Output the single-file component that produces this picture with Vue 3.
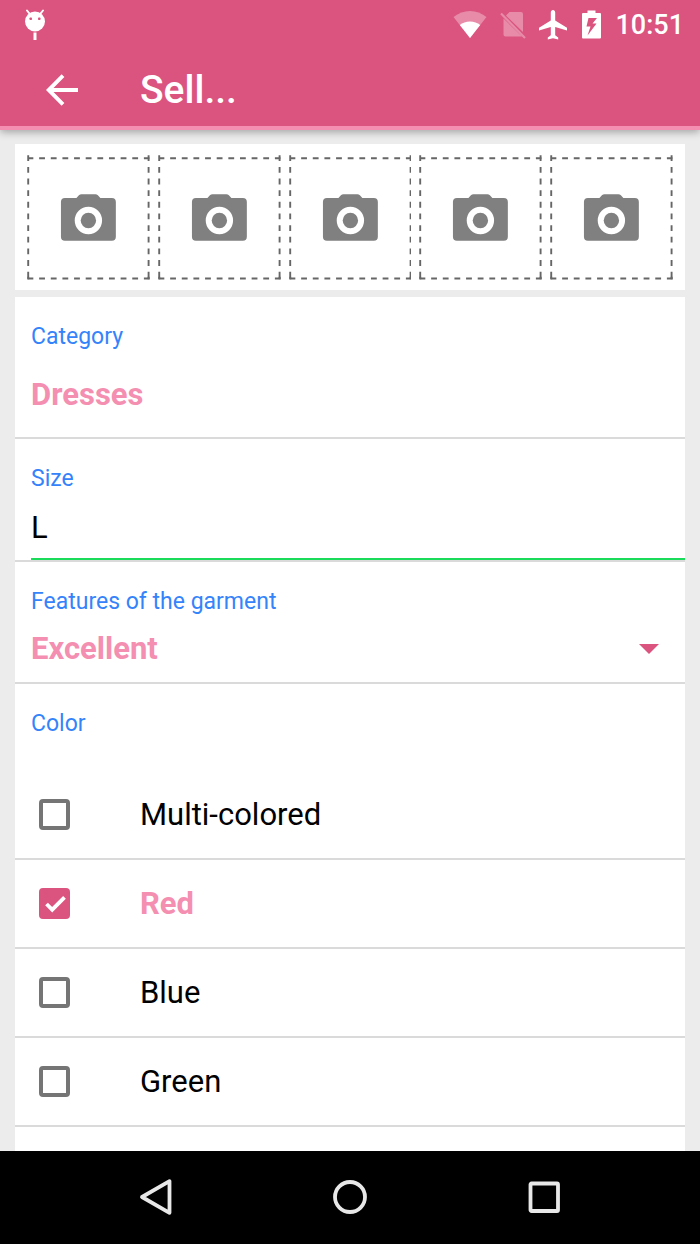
<script setup>
import { ref } from 'vue'

const slots = [1, 2, 3, 4, 5]
const size = ref('L')
const condition = ref('Excellent')
const colors = ref([
  { id: 'multi', name: 'Multi-colored', on: false },
  { id: 'red', name: 'Red', on: true },
  { id: 'blue', name: 'Blue', on: false },
  { id: 'green', name: 'Green', on: false }
])
</script>

<template>
  <div class="screen">
    <header class="top">
      <div class="status">
        <svg class="droid" width="22" height="32" viewBox="0 0 22 32" aria-hidden="true">
          <path d="M3 1.5l3.200 4M19 1.500l-3.200 4" stroke="#fff" stroke-width="2" stroke-linecap="round" />
          <circle cx="11" cy="12.500" r="10" fill="#fff" />
          <rect x="5.500" y="8.500" width="2.500" height="2.500" rx=".8" fill="#db537f" />
          <rect x="14" y="8.500" width="2.500" height="2.500" rx=".8" fill="#db537f" />
          <path d="M11 23.500v7.500" stroke="#fff" stroke-width="3" />
        </svg>
        <div class="indicators">
          <svg width="34" height="30" viewBox="0 0 34 30" aria-hidden="true">
            <path d="M17 28L.5 7Q8 1 17 1T33.500 7z" fill="#fff" fill-opacity=".33" />
            <path d="M17 28L6.800 15Q11 11.500 17 11.500T27.200 15z" fill="#fff" />
          </svg>
          <svg width="26" height="30" viewBox="0 0 26 30" aria-hidden="true">
            <path d="M9.500 2H21a2 2 0 0 1 2 2v18L6 5.500zM3.500 8.500L22 26.500H5.500a2 2 0 0 1-2-2z" fill="#fff" fill-opacity=".33" />
            <path d="M1 3.500L25 28" stroke="#fff" stroke-opacity=".33" stroke-width="2.200" />
          </svg>
          <svg width="28" height="30" viewBox="0 0 28 30" aria-hidden="true">
            <path d="M28 20.600v-2.900L16.200 10.400V2.500C16.200 1.100 15.200 0 14 0s-2.200 1.100-2.200 2.500v7.900L0 17.700v2.900l11.800-3.500v8.200L8.800 27.400v2.200l5.200-1.400 5.200 1.400v-2.200l-3-2.100v-8.200z" fill="#fff" />
          </svg>
          <svg class="battery" width="19" height="30" viewBox="0 0 19 30" aria-hidden="true">
            <path fill-rule="evenodd" d="M5.500 .5h8v2.500H18a1 1 0 0 1 1 1V27.500a1 1 0 0 1-1 1H1a1 1 0 0 1-1-1V4a1 1 0 0 1 1-1h4.500zM6.500 8L4.500 16.500h4L5.500 25.500 14.500 13.500h-4l4.500-5.500z" fill="#fff" />
          </svg>
          <time>10:51</time>
        </div>
      </div>
      <div class="toolbar">
        <button class="back" type="button" aria-label="Back">
          <svg width="32" height="32" viewBox="0 0 32 32" aria-hidden="true">
            <path d="M32 16H3M17 1.700L2.700 16l14.300 14.300" fill="none" stroke="#fff" stroke-width="3.900" />
          </svg>
        </button>
        <h1>Sell...</h1>
      </div>
    </header>

    <main>
      <section class="card photos">
        <button v-for="n in slots" :key="n" type="button" :aria-label="'Add photo ' + n">
          <svg viewBox="0 0 123 125" aria-hidden="true">
            <g fill="none" stroke="#666" stroke-width="1.900" stroke-dasharray="5.830 5.830">
              <path d="M.5 3.200H123M.5 123.700H123M1.200 .3V125M121.800 .3V125" />
            </g>
            <path d="M1.200 122v2.500M121.800 122v2.500" stroke="#666" stroke-width="1.900" />
            <path fill-rule="evenodd" fill="#808080" d="M38 43H49.500L52 40.300Q53 39.300 54.500 39.300H68.500Q70 39.300 71 40.300L73.500 43H85a4 4 0 0 1 4 4v35a4 4 0 0 1-4 4H38a4 4 0 0 1-4-4V47a4 4 0 0 1 4-4zM61.500 51.900a13.700 13.700 0 1 0 0 27.400a13.700 13.700 0 1 0 0-27.400z" />
            <circle cx="61.500" cy="65.600" r="7.700" fill="#808080" />
          </svg>
        </button>
      </section>

      <form class="card" @submit.prevent>
        <div class="field category">
          <span id="cat" class="label">Category</span>
          <button type="button" class="value" aria-describedby="cat">Dresses</button>
        </div>
        <div class="field size">
          <label class="label" for="size">Size</label>
          <input id="size" v-model="size" type="text" class="value" />
        </div>
        <div class="field features">
          <label class="label" for="cond">Features of the garment</label>
          <div class="pick">
            <select id="cond" v-model="condition" class="value">
              <option>Excellent</option>
              <option>Good</option>
            </select>
            <svg width="20" height="10" viewBox="0 0 20 10" aria-hidden="true">
              <path d="M0 0h20L10 10z" fill="#db537f" />
            </svg>
          </div>
        </div>
        <fieldset>
          <legend class="label">Color</legend>
          <label v-for="c in colors" :key="c.id" class="row" :class="{ on: c.on }">
            <span class="box">
              <input v-model="c.on" type="checkbox" />
              <svg v-if="c.on" viewBox="0 0 31 31" aria-hidden="true">
                <path d="M7.500 16l5.700 5.700L25.500 9.300" fill="none" stroke="#fff" stroke-width="3.800" />
              </svg>
            </span>
            <span>{{ c.name }}</span>
          </label>
        </fieldset>
      </form>
    </main>

    <nav>
      <button type="button" aria-label="Back">
        <svg width="38" height="38" viewBox="0 0 38 38" aria-hidden="true">
          <path d="M32.500 3.200V34.800L5 19z" fill="none" stroke="#e8e8e8" stroke-width="3.800" stroke-linejoin="round" />
        </svg>
      </button>
      <button type="button" aria-label="Home">
        <svg width="38" height="38" viewBox="0 0 38 38" aria-hidden="true">
          <circle cx="19" cy="19" r="15" fill="none" stroke="#e8e8e8" stroke-width="3.800" />
        </svg>
      </button>
      <button type="button" aria-label="Recent apps">
        <svg width="38" height="38" viewBox="0 0 38 38" aria-hidden="true">
          <rect x="5.500" y="5.500" width="27.500" height="27.500" rx="1" fill="none" stroke="#e8e8e8" stroke-width="3.800" stroke-linejoin="round" />
        </svg>
      </button>
    </nav>
  </div>
</template>

<style>
body {
  margin: 0;
}
</style>

<style scoped>
.screen {
  display: flex;
  flex-direction: column;
  height: 100vh;
  background: #ececec;
  font-family: Roboto, "Liberation Sans", sans-serif;
  color: #000;
}

.screen * {
  box-sizing: border-box;
}

button,
input,
select {
  margin: 0;
  padding: 0;
  border: 0;
  border-radius: 0;
  outline: 0;
  background: none;
  font-family: inherit;
  text-align: left;
  appearance: none;
}

svg {
  display: block;
}

.top {
  flex: none;
  background: #db537f;
  color: #fff;
  border-bottom: 4px solid #f48fb1;
  box-shadow: 0 2px 8px rgba(0, 0, 0, 0.32);
  z-index: 1;
}

.status {
  display: flex;
  justify-content: space-between;
  align-items: center;
  height: 48px;
  padding: 2px 16px 0 24px;
}

.indicators {
  display: flex;
  align-items: center;
  gap: 13px;
}

.battery {
  margin: 0 1px 0 2px;
}

time {
  font-size: 27px;
  line-height: 32px;
  font-weight: 500;
}

.toolbar {
  display: flex;
  align-items: center;
  height: 78px;
  padding: 6px 16px 0 46px;
}

.back {
  width: 94px;
}

h1 {
  margin: 0;
  font-size: 39px;
  line-height: 46px;
  font-weight: 500;
}

main {
  flex: 1;
  min-height: 0;
  overflow: hidden;
  display: flex;
  flex-direction: column;
  gap: 7px;
  padding: 14px 15px 0;
}

.card {
  flex: none;
  background: #fff;
}

form.card {
  flex: 1 0 auto;
}

.photos {
  display: flex;
  gap: 8px;
  padding: 11px 12px 10px;
}

.photos button {
  flex: 1;
}

.photos svg {
  width: 100%;
}

.field {
  display: flex;
  flex-direction: column;
  padding: 26px 0 0 16px;
  border-bottom: 2px solid #dadada;
}

.label {
  font-size: 23px;
  line-height: 28px;
  color: #3583fb;
}

.value {
  height: 40px;
  font-size: 31px;
  line-height: 40px;
  font-weight: 700;
  color: #f48fb1;
}

.category {
  gap: 24px;
  padding-bottom: 22px;
}

.size input {
  height: 67px;
  padding-top: 4px;
  border-bottom: 2px solid #1bdc5a;
  font-weight: 400;
  color: #000;
}

.features {
  padding-bottom: 13px;
}

.features {
  gap: 13px;
}

.pick {
  display: flex;
  align-items: center;
  padding-right: 26px;
}

.pick select {
  flex: 1;
}

fieldset {
  margin: 0;
  padding: 0;
  border: 0;
}

legend {
  padding: 26px 16px 33px;
}

.row {
  display: flex;
  align-items: center;
  height: 89px;
  padding: 1px 0 0 24px;
  gap: 70px;
  border-bottom: 2px solid #dadada;
  font-size: 31px;
  line-height: 40px;
}

.row.on {
  font-weight: 700;
  color: #f48fb1;
}

.box {
  display: grid;
  width: 31px;
  height: 31px;
}

.box > * {
  grid-area: 1 / 1;
}

.box input {
  border: 4px solid #757575;
  border-radius: 4px;
}

.on .box input {
  border-color: #db537f;
  background: #db537f;
}

nav {
  flex: none;
  display: flex;
  justify-content: center;
  align-items: center;
  gap: 156px;
  height: 93px;
  padding-bottom: 1px;
  background: #000;
  z-index: 1;
}
</style>
